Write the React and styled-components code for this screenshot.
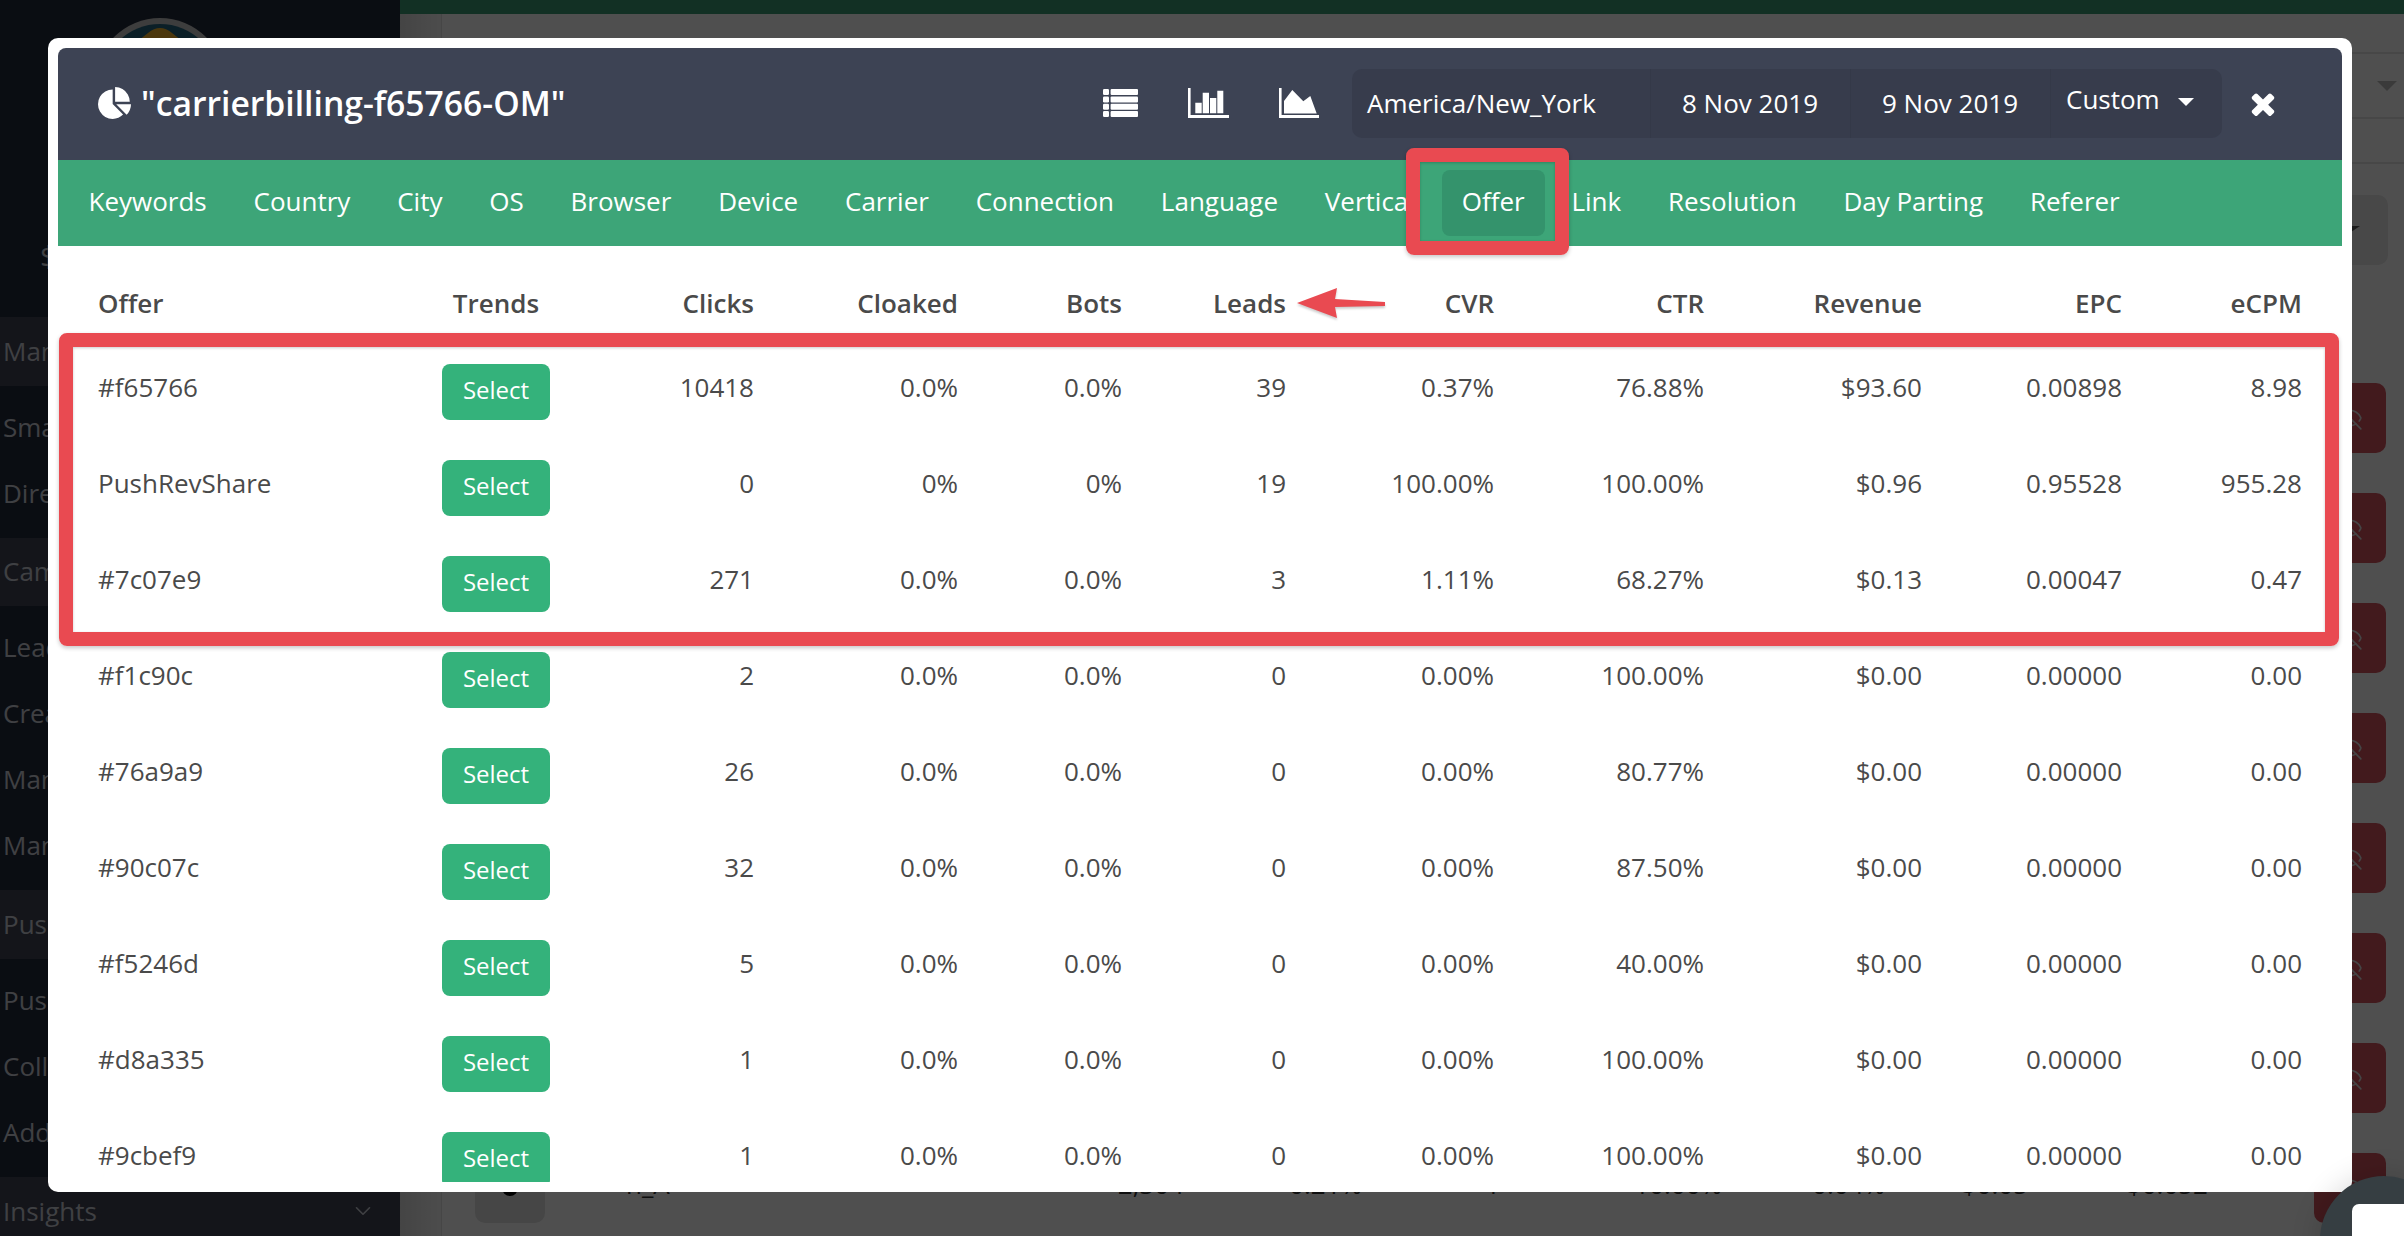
import React from 'react';
import styled, { createGlobalStyle } from 'styled-components';
import { ChevronDown, EyeOff } from 'lucide-react';

const GlobalStyle = createGlobalStyle`
  html, body {
    margin: 0;
    padding: 0;
    background: #fff;
    font-family: "Open Sans", "Liberation Sans", sans-serif;
    font-size: 26px;
  }
  * {
    box-sizing: border-box;
  }
`;

const Screen = styled.div`
  position: relative;
  display: flex;
  width: 2404px;
  height: 1236px;
  overflow: hidden;
`;

/* page behind the dialog */
const Sidebar = styled.aside`
  flex: 0 0 400px;
  height: 100%;
  overflow: hidden;
  background: #232a3a;
  color: #cbced8;
`;
const Logo = styled.svg`
  display: block;
  width: 130px;
  height: 130px;
  margin: 18px 0 0 95px;
`;
const Balance = styled.div`
  height: 169px;
  padding: 88px 0 0 40px;
  font-size: 30px;
  line-height: 40px;
`;
const NavHead = styled.div`
  display: flex;
  align-items: center;
  justify-content: space-between;
  height: ${(p) => p.$h || 69}px;
  padding: 0 24px 2px 3px;
  background: #414454;
  white-space: nowrap;
`;
const NavGroup = styled.div`
  padding: 9px 0 11px;
`;
const NavItem = styled.div`
  height: 66px;
  padding-left: 3px;
  line-height: 64px;
  white-space: nowrap;
`;

const Main = styled.main`
  flex: 1;
  display: flex;
  flex-direction: column;
  min-width: 0;
  background: #fff;
`;
const TopBar = styled.div`
  flex: 0 0 14px;
  background: #3a9b74;
`;
const Body = styled.div`
  flex: 1;
  display: flex;
  min-height: 0;
`;
const Gutter = styled.div`
  flex: 0 0 42px;
  border-right: 1px solid #e2e2e2;
  background: linear-gradient(to right, #dcdcdc, #f6f6f6);
`;
const Content = styled.div`
  flex: 1;
  min-width: 0;
`;
const FilterLine = styled.div`
  display: flex;
  align-items: center;
  justify-content: flex-end;
  height: ${(p) => p.$h}px;
  padding-right: 7px;
  border-bottom: 2px solid #e5e5e5;
`;
const PageCaret = styled.span`
  width: 0;
  height: 0;
  border-left: 10px solid transparent;
  border-right: 10px solid transparent;
  border-top: 10px solid #bbb;
`;
const FilterBar = styled.div`
  display: flex;
  justify-content: flex-end;
  height: 199px;
  padding: 31px 16px 0 0;
`;
const FilterButton = styled.div`
  display: flex;
  align-items: center;
  justify-content: center;
  width: 200px;
  height: 70px;
  border-radius: 10px;
  background: #e7e7e7;
`;
const DarkCaret = styled.span`
  width: 0;
  height: 0;
  margin-left: 120px;
  border-left: 12px solid transparent;
  border-right: 12px solid transparent;
  border-top: 8px solid #555;
`;
const PageRow = styled.div`
  display: grid;
  grid-template-columns: 70px 81px 374px 184px 178px 138px 222px 163px 143px 180px 106px 72px;
  align-items: center;
  height: 110px;
  padding-left: 33px;
  color: #333;
`;
const PageCell = styled.div`
  grid-column: ${(p) => p.$col};
  padding-bottom: 8px;
  text-align: ${(p) => (p.$left ? 'left' : 'right')};
`;
const RowTool = styled.div`
  display: flex;
  align-items: center;
  justify-content: center;
  height: 70px;
  border-radius: 10px;
  background: #e2e2e2;
  color: #000;
`;
const RowAction = styled(RowTool)`
  grid-column: 12;
  background: #d5545e;
  color: #ddd;
`;

/* dialog */
const Backdrop = styled.div`
  position: absolute;
  inset: 0;
  background: rgba(0, 0, 0, 0.69);
`;
const Dialog = styled.section`
  position: absolute;
  left: 48px;
  top: 38px;
  display: flex;
  flex-direction: column;
  width: 2304px;
  height: 1154px;
  padding: 10px;
  border-radius: 10px;
  background: #fff;
`;
const Header = styled.header`
  flex: 0 0 112px;
  display: flex;
  align-items: center;
  padding: 0 67px 2px 40px;
  border-radius: 8px 8px 0 0;
  background: #3d4354;
  color: #fff;
`;
const Title = styled.h1`
  flex: 1;
  display: flex;
  align-items: center;
  gap: 10px;
  margin: 0;
  font-size: 33.7px;
  font-weight: 600;
  line-height: 44px;
`;
const HeaderIcon = styled.svg`
  flex: none;
  display: block;
  fill: #fff;
  margin-right: ${(p) => p.$mr}px;
`;
const RangeGroup = styled.div`
  display: flex;
  align-items: stretch;
  width: 870px;
  height: 69px;
  border-radius: 10px;
  background: #373c4c;
  margin-right: 29px;
`;
const RangeField = styled.div`
  flex: 0 0 ${(p) => p.$w}px;
  display: flex;
  align-items: center;
  padding-left: ${(p) => p.$pl}px;
  border-right: 1px solid #343948;
  font-size: 26px;
  white-space: nowrap;
`;
const RangeSelect = styled.div`
  flex: 1;
  display: flex;
  align-items: center;
  gap: 18px;
  padding: 0 0 8px 15px;
  font-size: 26px;
`;
const SelectCaret = styled.span`
  width: 0;
  height: 0;
  margin-top: 6px;
  border-left: 8px solid transparent;
  border-right: 8px solid transparent;
  border-top: 8px solid #fff;
`;
const Tabs = styled.nav`
  flex: 0 0 86px;
  display: flex;
  align-items: center;
  gap: 6.8px;
  padding-left: 10.5px;
  background: #3da578;
`;
const Tab = styled.a`
  height: 66px;
  padding: 0 20px;
  border-radius: 8px;
  background: ${(p) => (p.$active ? '#34936c' : 'transparent')};
  color: #fff;
  font-size: 26px;
  line-height: 62px;
  white-space: nowrap;
`;
const TableWrap = styled.div`
  flex: 1;
  min-height: 0;
  overflow: hidden;
  padding: 0 40px;
  color: #4a4a4a;
`;
const Grid = styled.div`
  display: grid;
  grid-template-columns: 344px 108px 204px 204px 164px 164px 208px 210px 218px 200px 180px;
  align-items: center;
`;
const HeadRow = styled(Grid)`
  height: 98px;
  padding-top: 15px;
  font-weight: 600;
`;
const DataRow = styled(Grid)`
  height: 96px;
`;
const Cell = styled.div`
  padding-bottom: ${(p) => (p.$head ? 0 : 11)}px;
  text-align: ${(p) => (p.$align ? p.$align : 'right')};
  white-space: nowrap;
`;
const SelectButton = styled.button`
  width: 108px;
  height: 56px;
  padding: 0 0 5px;
  border: 0;
  border-radius: 8px;
  background: #34b27b;
  color: #fff;
  font-family: inherit;
  font-size: 24px;
`;

/* red annotations drawn on top of the screenshot */
const Marker = styled.div`
  position: absolute;
  left: ${(p) => p.$x}px;
  top: ${(p) => p.$y}px;
  width: ${(p) => p.$w}px;
  height: ${(p) => p.$h}px;
  border: 14px solid #e94a51;
  border-radius: 8px;
  box-shadow: 0 2px 4px rgba(0, 0, 0, 0.22), inset 0 1px 3px rgba(0, 0, 0, 0.2);
`;
const Arrow = styled.svg`
  position: absolute;
  left: 1249px;
  top: 250px;
  width: 88px;
  height: 30px;
  overflow: visible;
  filter: drop-shadow(0 2px 1px rgba(0, 0, 0, 0.2));
`;

const ChatBubble = styled.div`
  position: absolute;
  left: 2320px;
  top: 1176px;
  width: 128px;
  height: 128px;
  border-radius: 50%;
  background: #363e42;
  box-shadow: 0 0 30px rgba(0, 0, 0, 0.16);
`;
const ChatFace = styled.div`
  position: absolute;
  left: 32px;
  top: 28px;
  width: 80px;
  height: 80px;
  border-radius: 7px;
  background: #fff;
`;

const tabs = [
  'Keywords', 'Country', 'City', 'OS', 'Browser', 'Device', 'Carrier', 'Connection',
  'Language', 'Vertical', 'Offer', 'Link', 'Resolution', 'Day Parting', 'Referer',
];

const columns = ['Clicks', 'Cloaked', 'Bots', 'Leads', 'CVR', 'CTR', 'Revenue', 'EPC', 'eCPM'];

const offers = [
  ['#f65766', '10418', '0.0%', '0.0%', '39', '0.37%', '76.88%', '$93.60', '0.00898', '8.98'],
  ['PushRevShare', '0', '0%', '0%', '19', '100.00%', '100.00%', '$0.96', '0.95528', '955.28'],
  ['#7c07e9', '271', '0.0%', '0.0%', '3', '1.11%', '68.27%', '$0.13', '0.00047', '0.47'],
  ['#f1c90c', '2', '0.0%', '0.0%', '0', '0.00%', '100.00%', '$0.00', '0.00000', '0.00'],
  ['#76a9a9', '26', '0.0%', '0.0%', '0', '0.00%', '80.77%', '$0.00', '0.00000', '0.00'],
  ['#90c07c', '32', '0.0%', '0.0%', '0', '0.00%', '87.50%', '$0.00', '0.00000', '0.00'],
  ['#f5246d', '5', '0.0%', '0.0%', '0', '0.00%', '40.00%', '$0.00', '0.00000', '0.00'],
  ['#d8a335', '1', '0.0%', '0.0%', '0', '0.00%', '100.00%', '$0.00', '0.00000', '0.00'],
  ['#9cbef9', '1', '0.0%', '0.0%', '0', '0.00%', '100.00%', '$0.00', '0.00000', '0.00'],
];

// only the last page row shows from under the dialog
const pageRows = [
  [], [], [], [], [], [], [],
  ['n_A', '2,304', '0.21%', '1', '10.00%', '0.04%', '$0.05', '$0.052'],
];

function PieIcon() {
  return (
    <HeaderIcon viewBox="0 0 1728 1665" width="33" height="32" $mr={0}>
      <path d="M768 890l546 546q-106 108-247.5 168.5t-298.5 60.5q-209 0-385.5-103t-279.5-279.5-103-385.5 103-385.5 279.5-279.5 385.5-103v762zm187 6h773q0 157-60.5 298.5t-167.5 247.5zm709-128h-768v-768q209 0 385.5 103t279.5 279.5 103 385.5z" />
    </HeaderIcon>
  );
}

function TableIcon() {
  return (
    <HeaderIcon viewBox="0 0 35 28" width="35" height="28" $mr={50}>
      {[0, 7.4, 14.8, 22].map((y) => (
        <g key={y}>
          <rect x="0" y={y} width="6" height="6" rx="1.2" />
          <rect x="7.6" y={y} width="27.4" height="6" rx="1" />
        </g>
      ))}
    </HeaderIcon>
  );
}

function BarsIcon() {
  return (
    <HeaderIcon viewBox="0 0 41 30" width="41" height="30" $mr={50}>
      <path d="M0 0h2.6v27H41v3H0z" />
      <path d="M7.3 14.7h6.4v10.6H7.3zM14.7 4.7H21v20.6h-6.3zM22 10h6.3v15.3H22zM29.3 2.7h6v22.6h-6z" />
    </HeaderIcon>
  );
}

function AreaIcon() {
  return (
    <HeaderIcon viewBox="0 0 40 30" width="40" height="30" $mr={33}>
      <path d="M0 0h2.6v27H40v3H0z" />
      <path d="M5 25.4V13l8.3-11 11 11.2 7-5.2 6.4 17.4z" />
    </HeaderIcon>
  );
}

function CloseIcon() {
  return (
    <HeaderIcon viewBox="302 238 1188 1316" width="24" height="25" $mr={0}>
      <path d="M1490 1322q0 40-28 68l-136 136q-28 28-68 28t-68-28l-294-294-294 294q-28 28-68 28t-68-28l-136-136q-28-28-28-68t28-68l294-294-294-294q-28-28-28-68t28-68l136-136q28-28 68-28t68 28l294 294 294-294q28-28 68-28t68 28l136 136q28 28 28 68t-28 68l-294 294 294 294q28 28 28 68z" />
    </HeaderIcon>
  );
}

function App() {
  return (
    <>
      <GlobalStyle />
      <Screen>
        <Sidebar>
          <Logo viewBox="0 0 130 130">
            <circle cx="65" cy="65" r="65" fill="#c4c4c4" />
            <circle cx="65" cy="65" r="59" fill="#24657f" />
            <path d="M65 10q6 0 12 5l28 22v50L65 116 25 87V37l28-22q6-5 12-5z" fill="#f2b12b" />
          </Logo>
          <Balance>$0.00</Balance>
          <NavHead>Manage</NavHead>
          <NavGroup>
            <NavItem>Smart Links</NavItem>
            <NavItem>Direct Links</NavItem>
          </NavGroup>
          <NavHead $h={68}>Campaigns</NavHead>
          <NavGroup>
            <NavItem>Leads</NavItem>
            <NavItem>Create Campaign</NavItem>
            <NavItem>Manage Campaigns</NavItem>
            <NavItem>Manage Creatives</NavItem>
          </NavGroup>
          <NavHead>Push</NavHead>
          <NavGroup>
            <NavItem>Push Campaigns</NavItem>
            <NavItem>Collections</NavItem>
            <NavItem>Add Creative</NavItem>
          </NavGroup>
          <NavHead>
            Insights
            <ChevronDown size={26} strokeWidth={1.5} />
          </NavHead>
        </Sidebar>

        <Main>
          <TopBar />
          <Body>
            <Gutter />
            <Content>
              <FilterLine $h={40} />
              <FilterLine $h={65}>
                <PageCaret />
              </FilterLine>
              <FilterLine $h={45} />
              <FilterBar>
                <FilterButton>
                  <DarkCaret />
                </FilterButton>
              </FilterBar>
              {pageRows.map(([name, ...values], n) => (
                <PageRow key={n}>
                  <RowTool>
                    <svg width="18" height="18" viewBox="0 0 18 18">
                      <circle cx="9" cy="9" r="8" fill="currentColor" />
                    </svg>
                  </RowTool>
                  {name && <PageCell $col={3} $left>{name}</PageCell>}
                  {values.map((v, i) => (
                    <PageCell key={i} $col={4 + i}>{v}</PageCell>
                  ))}
                  <RowAction>
                    <EyeOff size={26} strokeWidth={1.5} />
                  </RowAction>
                </PageRow>
              ))}
            </Content>
          </Body>
        </Main>

        <Backdrop />

        <Dialog>
          <Header>
            <Title>
              <PieIcon />
              "carrierbilling-f65766-OM"
            </Title>
            <TableIcon />
            <BarsIcon />
            <AreaIcon />
            <RangeGroup>
              <RangeField $w={299} $pl={15}>America/New_York</RangeField>
              <RangeField $w={200} $pl={31}>8 Nov 2019</RangeField>
              <RangeField $w={200} $pl={31}>9 Nov 2019</RangeField>
              <RangeSelect>
                Custom
                <SelectCaret />
              </RangeSelect>
            </RangeGroup>
            <CloseIcon />
          </Header>

          <Tabs>
            {tabs.map((t) => (
              <Tab key={t} $active={t === 'Offer'}>{t}</Tab>
            ))}
          </Tabs>

          <TableWrap>
            <HeadRow>
              <Cell $head $align="left">Offer</Cell>
              <Cell $head $align="center">Trends</Cell>
              {columns.map((c) => (
                <Cell $head key={c}>{c}</Cell>
              ))}
            </HeadRow>
            {offers.map(([name, ...values]) => (
              <DataRow key={name}>
                <Cell $align="left">{name}</Cell>
                <SelectButton>Select</SelectButton>
                {values.map((v, i) => (
                  <Cell key={i}>{v}</Cell>
                ))}
              </DataRow>
            ))}
          </TableWrap>

          <Marker $x={1358} $y={110} $w={163} $h={107} />
          <Marker $x={11} $y={295} $w={2280} $h={313} />
          <Arrow viewBox="0 0 88 30">
            <path d="M0 15 40 0 38 11 88 14v4L38 19 40 30z" fill="#e94a51" />
          </Arrow>
        </Dialog>

        <ChatBubble>
          <ChatFace />
        </ChatBubble>
      </Screen>
    </>
  );
}

export default App;
